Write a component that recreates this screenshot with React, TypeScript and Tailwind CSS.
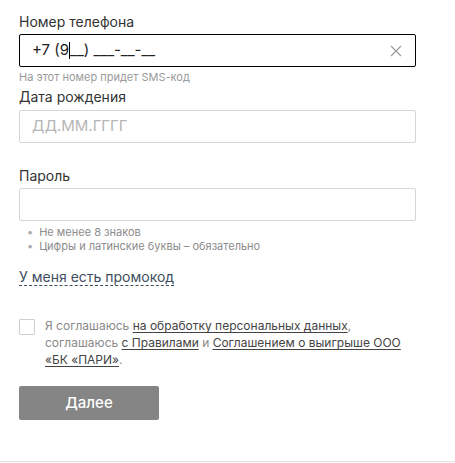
import React from 'react';

const font = { fontFamily: 'Inter, "Noto Sans", sans-serif' };

function Label({ children }: { children: React.ReactNode }) {
  return <div className="text-[14px] leading-[18px] text-[#333]">{children}</div>;
}

export default function App() {
  return (
    <div className="w-[455px] h-[463px] bg-white relative" style={font}>
      <div className="px-[19px] pt-[13px]">
        {/* Phone */}
        <Label>Номер телефона</Label>
        <div className="mt-[3px] w-[397px] h-[33px] border border-black rounded-[2px] flex items-center pl-[12px] pr-[13px]">
          <div className="flex-1 text-[15px] text-[#222] flex items-center">
            <span>+7 (9</span>
            <span className="inline-block w-px h-[17px] bg-black" />
            <span>__) ___-__-__</span>
          </div>
          <svg width="12" height="12" viewBox="0 0 12 12" className="text-[#999]">
            <path d="M1 1L11 11M11 1L1 11" stroke="currentColor" strokeWidth="1.1" />
          </svg>
        </div>
        <div className="mt-[3px] text-[11px] leading-[14px] text-[#9a9a9a]">На этот номер придет SMS-код</div>

        {/* Birth date */}
        <div className="mt-[4px]">
          <Label>Дата рождения</Label>
        </div>
        <div className="mt-[4px] w-[397px] h-[33px] border border-[#d6d6d6] rounded-[2px] flex items-center pl-[12px]">
          <span className="text-[15px] text-[#b5b5b5]">ДД.ММ.ГГГГ</span>
        </div>

        {/* Password */}
        <div className="mt-[24px]">
          <Label>Пароль</Label>
        </div>
        <div className="mt-[3px] w-[397px] h-[33px] border border-[#d6d6d6] rounded-[2px]" />
        <ul className="mt-[4px] pl-[8px] text-[11px] leading-[14px] text-[#8c8c8c]">
          <li className="flex gap-[6px]"><span className="text-[#aaa]">•</span>Не менее 8 знаков</li>
          <li className="flex gap-[6px]"><span className="text-[#aaa]">•</span>Цифры и латинские буквы – обязательно</li>
        </ul>

        {/* Promo */}
        <div className="mt-[11px]">
          <span className="text-[14px] leading-[18px] text-[#3d4d5d] border-b border-dashed border-[#3d4d5d]">У меня есть промокод</span>
        </div>

        {/* Agreement */}
        <div className="mt-[30px] flex gap-[10px]">
          <div className="w-[16px] h-[16px] border border-[#cfcfcf] rounded-[1px] shrink-0 mt-[1px]" />
          <p className="text-[12px] leading-[17px] text-[#8a8a8a] -mt-[1px]">
            Я соглашаюсь <span className="underline text-[#444] underline-offset-2">на обработку персональных данных</span>,
            <br />
            соглашаюсь <span className="underline text-[#444] underline-offset-2">с Правилами</span> и{' '}
            <span className="underline text-[#444] underline-offset-2">Соглашением о выигрыше ООО</span>
            <br />
            <span className="underline text-[#444] underline-offset-2">«БК «ПАРИ»</span>.
          </p>
        </div>

        <button className="mt-[18px] w-[140px] h-[34px] bg-[#858585] rounded-[2px] text-white text-[15px] font-medium">
          Далее
        </button>
      </div>
      <div className="absolute left-0 right-0 top-[461px] h-px bg-[#e3e3e3]" />
    </div>
  );
}
